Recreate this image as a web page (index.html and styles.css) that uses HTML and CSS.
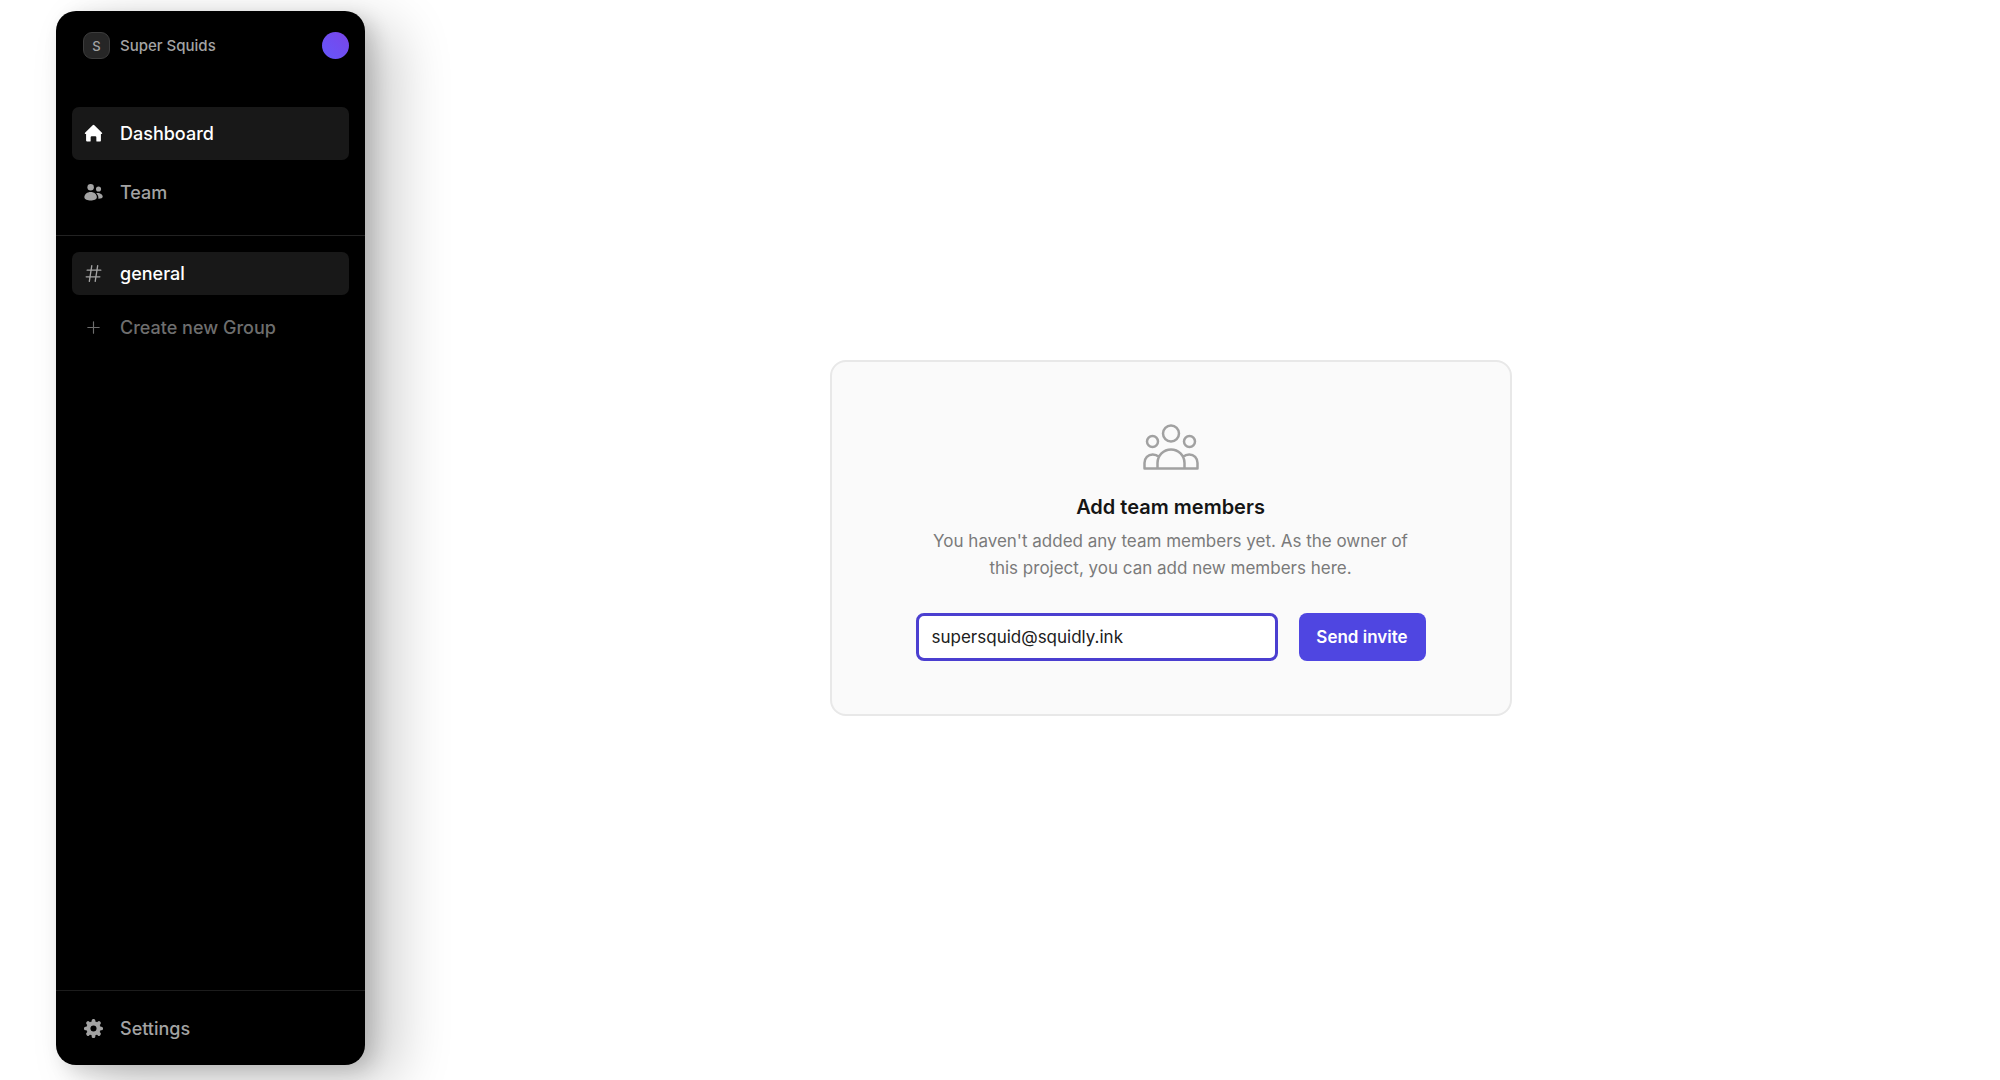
FILE: index.html
```html
<!DOCTYPE html>
<html lang="en">
<head>
<meta charset="utf-8">
<meta name="viewport" content="width=device-width, initial-scale=1">
<title>Super Squids</title>
<link rel="stylesheet" href="styles.css">
</head>
<body>
<aside class="sidebar">
  <header class="workspace">
    <span class="workspace-badge">S</span>
    <span class="workspace-name">Super Squids</span>
    <button class="avatar" type="button" aria-label="Account"></button>
  </header>
  <nav class="nav nav-main" aria-label="Main">
    <a class="nav-item is-active" href="#dashboard" aria-current="page">
      <svg class="icon" viewBox="0 0 20 20" fill="currentColor" aria-hidden="true"><path d="M9.100 1.300a1.300 1.300 0 0 1 1.800 0l8 7.900c.6.6.3 1.300-.5 1.300h-.6v6.900c0 .7-.4 1.100-1.100 1.100h-3c-.4 0-.7-.3-.7-.7v-3.900c0-.7-.4-1.100-1.100-1.100H8.100c-.7 0-1.100.4-1.100 1.100v3.900c0 .4-.3.700-.7.700h-3c-.7 0-1.100-.4-1.100-1.100v-6.900h-.6c-.8 0-1.100-.7-.5-1.300z"/></svg>
      Dashboard
    </a>
    <a class="nav-item" href="#team">
      <svg class="icon" viewBox="0 0 20 20" fill="currentColor" aria-hidden="true"><circle cx="7" cy="4.400" r="3.400"/><circle cx="15.300" cy="6.300" r="2.700"/><path d="M7 9.600c3.700 0 6.500 2.400 6.500 5.400 0 2.300-3.300 3.500-6.500 3.500S.4 17.300.4 15c0-3 2.900-5.400 6.600-5.400z"/><path d="M12.900 10.700c3.900-.5 6.800 1.500 6.800 3.700 0 1.300-1.500 2-4.600 2.100.4-2.300-.5-4.300-2.200-5.800z"/></svg>
      Team
    </a>
  </nav>
  <nav class="nav nav-groups" aria-label="Groups">
    <a class="nav-item is-active is-group" href="#general">
      <svg class="icon icon-hash" viewBox="0 0 20 20" fill="none" stroke="currentColor" stroke-width="1.400" stroke-linecap="round" aria-hidden="true"><path d="M3.300 6.500h14.400M2.300 13.500h14.400M8.200 1.800 5.600 18.200M14.400 1.800l-2.600 16.400"/></svg>
      general
    </a>
    <button class="nav-item is-group is-muted" type="button">
      <svg class="icon" viewBox="0 0 20 20" fill="none" stroke="currentColor" stroke-width="1.200" stroke-linecap="round" aria-hidden="true"><path d="M10 4v12M4 10h12"/></svg>
      Create new Group
    </button>
  </nav>
  <footer class="nav nav-footer">
    <a class="nav-item" href="#settings">
      <svg class="icon" viewBox="0 0 20 20" aria-hidden="true"><g fill="currentColor"><circle cx="10" cy="10" r="7.600"/><g id="teeth"><rect x="8.100" y="0" width="3.800" height="20" rx="1.600"/><rect x="0" y="8.100" width="20" height="3.800" rx="1.600"/></g><use href="#teeth" transform="rotate(45 10 10)"/></g><circle cx="10" cy="10" r="3.200" fill="#000"/></svg>
      Settings
    </a>
  </footer>
</aside>
<main class="content">
  <section class="card">
    <svg class="card-icon" viewBox="0 0 56 46" fill="none" stroke="currentColor" stroke-width="2.500" stroke-linejoin="round" aria-hidden="true"><circle cx="28" cy="9.500" r="8"/><circle cx="9.500" cy="17.500" r="5.500"/><circle cx="46.500" cy="17.500" r="5.500"/><path d="M14.500 44.500V39a13.500 13.500 0 0 1 27 0v5.500zM14.500 44.500H1.500V39c0-5 3.500-8.500 8.200-8.500 2.500 0 4.600.8 6.100 2.300M41.500 44.500h13V39c0-5-3.500-8.500-8.200-8.500-2.500 0-4.600.8-6.100 2.300"/></svg>
    <h1 class="card-title">Add team members</h1>
    <p class="card-text">You haven't added any team members yet. As the owner of this project, you can add new members here.</p>
    <form class="invite">
      <input class="invite-email" type="email" aria-label="Email address" value="supersquid@squidly.ink">
      <button class="invite-send" type="button">Send invite</button>
    </form>
  </section>
</main>
</body>
</html>
```
FILE: styles.css
```css
*, *::before, *::after { box-sizing: border-box; }

body {
  display: flex;
  min-height: 100vh;
  margin: 0;
  padding: 11px 24px 15px 56px;
  background: #fff;
  color: #151515;
  font: 500 18px/27px Inter, sans-serif;
}

button, input { font: inherit; }

.sidebar {
  display: flex;
  flex: 0 0 309px;
  flex-direction: column;
  border-radius: 20px;
  background: #000;
  box-shadow: 32px 16px 56px rgba(0, 0, 0, .2), 8px 6px 20px rgba(0, 0, 0, .16);
}

.workspace {
  display: flex;
  align-items: center;
  gap: 10px;
  padding: 21px 16px 20px 27px;
  color: #a3a3a3;
  font-size: 15px;
}

.workspace-badge {
  display: grid;
  place-items: center;
  width: 27px;
  height: 27px;
  border: 1px solid #3c3c3c;
  border-radius: 9px;
  background: #262626;
  font-size: 13px;
}

.avatar {
  width: 27px;
  height: 27px;
  margin-left: auto;
  padding: 0;
  border: 0;
  border-radius: 50%;
  background: linear-gradient(45deg, #6557fb, #7a45e8);
}

.nav {
  display: flex;
  flex-direction: column;
  padding: 0 16px;
}

.nav-main { gap: 6px; padding-top: 28px; padding-bottom: 16px; }

.nav-groups {
  gap: 11px;
  padding-top: 16px;
  border-top: 1px solid #222;
}

.nav-footer {
  margin-top: auto;
  padding-top: 11px;
  padding-bottom: 10px;
  border-top: 1px solid #1c1c1c;
}

.nav-item {
  display: flex;
  align-items: center;
  gap: 17px;
  width: 100%;
  padding: 13px 12px;
  border: 0;
  border-radius: 7px;
  background: none;
  color: #a3a3a3;
  text-align: left;
  text-decoration: none;
}

.nav-item.is-group { padding: 8px 12px; }
.nav-item.is-active { background: #181818; color: #fff; }
.nav-item.is-muted { color: #6e6e6e; }

.icon { flex: none; width: 19px; height: 19px; }
.icon-hash { color: #a3a3a3; }

.content {
  display: flex;
  flex: 1;
  align-items: center;
  justify-content: center;
}

.card {
  display: flex;
  flex-direction: column;
  align-items: center;
  width: 100%;
  max-width: 682px;
  padding: 62px 84px 53px;
  border: 2px solid #e8e8e8;
  border-radius: 16px;
  background: #fafafa;
}

.card-icon { width: 56px; height: 46px; color: #a1a1a1; }

.card-title {
  margin: 23px 0 7px;
  font-size: 20px;
  font-weight: 600;
  line-height: 28px;
}

.card-text {
  margin: 0;
  padding: 0 12px;
  color: #7a7a7a;
  font-size: 17px;
  font-weight: 400;
  text-align: center;
}

.invite {
  display: flex;
  gap: 21px;
  width: 100%;
  margin-top: 31px;
}

.invite-email {
  flex: 1;
  min-width: 0;
  height: 48px;
  padding: 0 13px;
  border: 3px solid #4b3fd0;
  border-radius: 8px;
  outline: 0;
  background: #fff;
  color: #202020;
  font-size: 17px;
  font-weight: 400;
}

.invite-send {
  flex: none;
  width: 127px;
  height: 48px;
  padding: 0;
  border: 0;
  border-radius: 8px;
  background: #4f46e1;
  color: #fff;
  font-size: 17px;
  font-weight: 600;
}
```
